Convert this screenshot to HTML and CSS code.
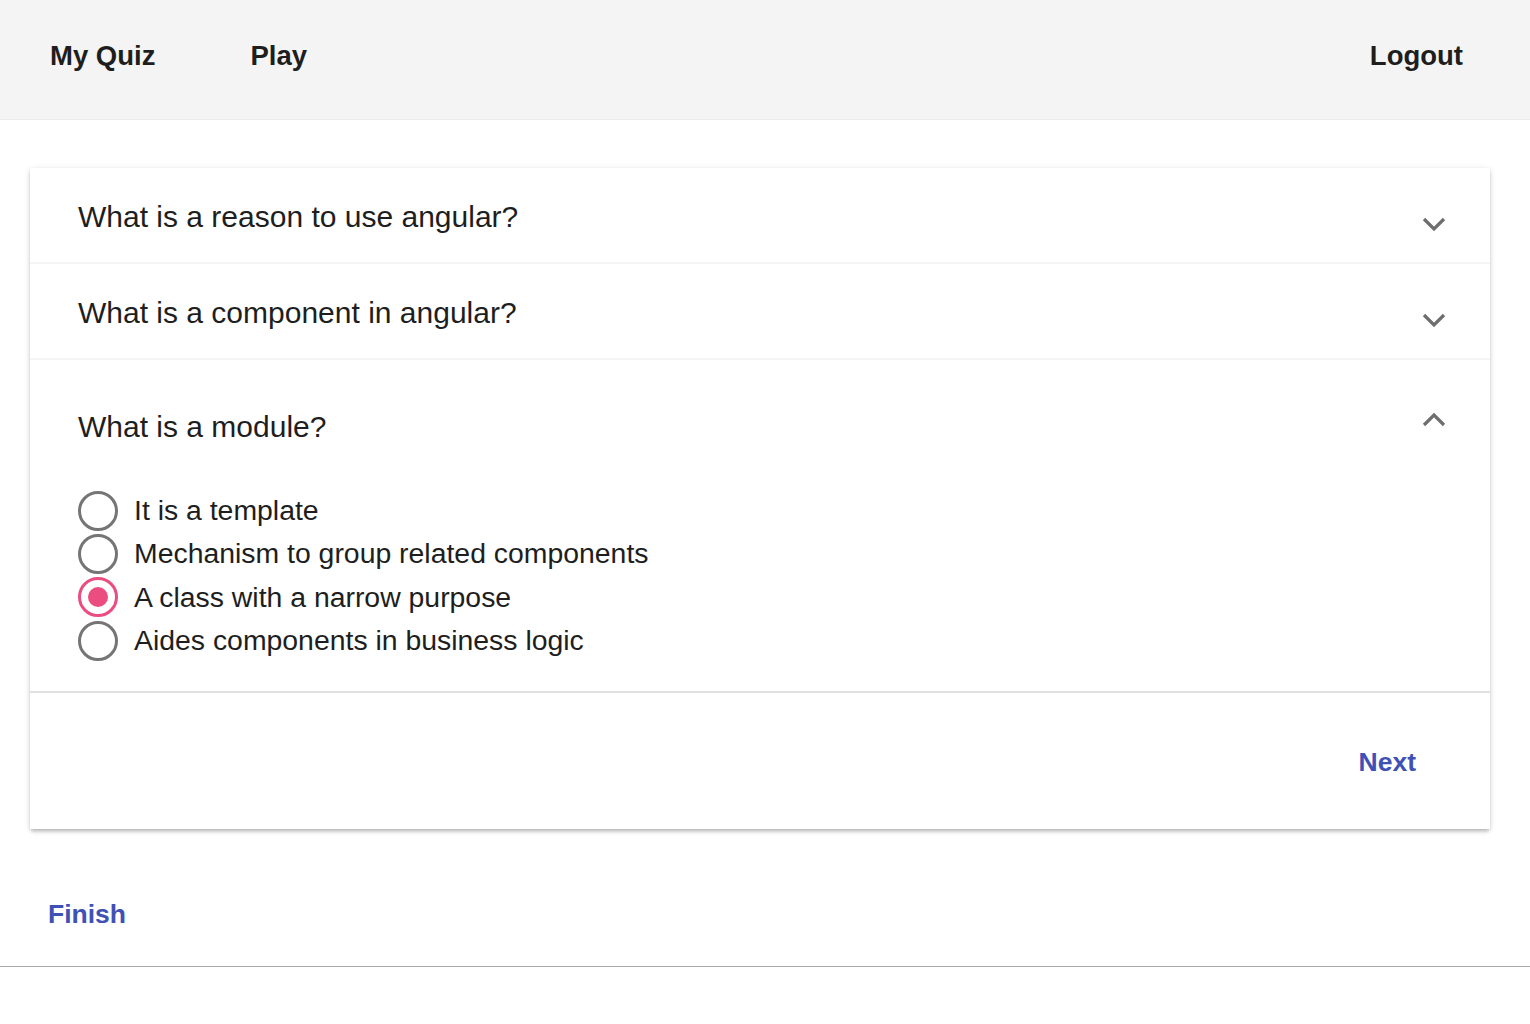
FILE: index.html
```html
<!DOCTYPE html>
<html>
<head>
<meta charset="utf-8">
<link rel="stylesheet" href="styles.css">
</head>
<body>
<div class="page">
  <header class="topbar">
    <nav class="nav-left">
      <a class="nav-link">My Quiz</a>
      <a class="nav-link">Play</a>
    </nav>
    <a class="nav-link">Logout</a>
  </header>
  <main class="content">
    <section class="accordion">
      <div class="panel">
        <div class="panel-header">
          <span class="question">What is a reason to use angular?</span>
          <svg class="chevron down" width="24" height="16" viewBox="0 0 24 16"><path d="M2 3 L12 13 L22 3" fill="none" stroke="#6e6e6e" stroke-width="3.2"/></svg>
        </div>
      </div>
      <div class="panel">
        <div class="panel-header">
          <span class="question">What is a component in angular?</span>
          <svg class="chevron down" width="24" height="16" viewBox="0 0 24 16"><path d="M2 3 L12 13 L22 3" fill="none" stroke="#6e6e6e" stroke-width="3.2"/></svg>
        </div>
      </div>
      <div class="panel open">
        <div class="panel-header tall">
          <span class="question">What is a module?</span>
          <svg class="chevron up" width="24" height="16" viewBox="0 0 24 16"><path d="M2 13 L12 3 L22 13" fill="none" stroke="#6e6e6e" stroke-width="3.2"/></svg>
        </div>
        <div class="options">
          <label class="option"><span class="radio"></span><span>It is a template</span></label>
          <label class="option"><span class="radio"></span><span>Mechanism to group related components</span></label>
          <label class="option"><span class="radio checked"></span><span>A class with a narrow purpose</span></label>
          <label class="option"><span class="radio"></span><span>Aides components in business logic</span></label>
        </div>
        <div class="actions">
          <button class="text-btn">Next</button>
        </div>
      </div>
    </section>
    <div class="finish-row">
      <button class="text-btn">Finish</button>
    </div>
  </main>
</div>
</body>
</html>
```

FILE: styles.css
```css
* { box-sizing: border-box; }
html, body { margin: 0; padding: 0; background: #fff; }
body {
  font-family: "Liberation Sans", Arial, Helvetica, sans-serif;
  color: #1e1e1e;
}
.page {
  height: 967px;
  background: #fff;
  border-bottom: 1px solid #a8a8a8;
  box-shadow: 0 2px 3px rgba(0,0,0,0.25), 0 4px 8px rgba(0,0,0,0.08);
}
.topbar {
  height: 120px;
  background: #f4f4f4;
  border-bottom: 1px solid #ebebeb;
  display: flex;
  align-items: center;
  justify-content: space-between;
  padding: 0 67px 7px 50px;
}
.nav-left { display: flex; gap: 95px; }
.nav-link {
  font-size: 27.5px;
  font-weight: bold;
  color: #1e1e1e;
}
.content { padding: 48px 40px 0 30px; }
.accordion {
  background: #fff;
  box-shadow: 0 3px 4px -1px rgba(0,0,0,0.25), 0 1px 6px rgba(0,0,0,0.12);
}
.panel + .panel { border-top: 2px solid #f4f4f4; }
.panel-header {
  height: 94px;
  display: flex;
  align-items: center;
  justify-content: space-between;
  padding: 3px 44px 0 48px;
}
.panel-header.tall { height: 129px; padding-top: 4px; }
.question { font-size: 30px; }
.chevron.down { margin-top: 14px; }
.chevron.up { margin-top: -14px; }
.options {
  display: flex;
  flex-direction: column;
  padding: 0 48px 29px 48px;
}
.option {
  height: 43.3px;
  display: flex;
  align-items: center;
  gap: 16px;
  font-size: 28.4px;
}
.radio {
  width: 40px;
  height: 40px;
  border: 3px solid #757575;
  border-radius: 50%;
  display: flex;
  align-items: center;
  justify-content: center;
  flex: none;
}
.radio.checked { border-color: #ec4d80; }
.radio.checked::after {
  content: "";
  width: 20px;
  height: 20px;
  border-radius: 50%;
  background: #ec4d80;
}
.actions {
  height: 138px;
  border-top: 2px solid #e0e0e0;
  display: flex;
  align-items: center;
  justify-content: flex-end;
  padding: 2px 58px 0 0;
}
.text-btn {
  background: none;
  border: none;
  font-family: inherit;
  font-size: 26.5px;
  font-weight: bold;
  color: #3f51b5;
  padding: 8px 16px;
  cursor: pointer;
}
.finish-row {
  padding: 62px 0 0 2px;
}
```
